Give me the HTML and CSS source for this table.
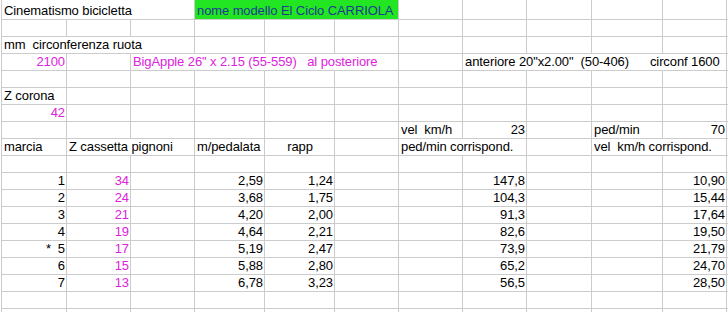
FILE: index.html
```html
<!DOCTYPE html>
<html lang="it">
<head>
<meta charset="utf-8">
<title>Cinematismo bicicletta</title>
<link rel="stylesheet" href="styles.css">
</head>
<body>
<div class="sheet">
  <div class="row first">
    <div class="cell a span3 over">Cinematismo bicicletta</div>
    <div class="cell d span3 title">nome modello El Ciclo CARRIOLA</div>
  </div>
  <div class="row"></div>
  <div class="row">
    <div class="cell a span3 over">mm  circonferenza ruota</div>
  </div>
  <div class="row">
    <div class="cell a right pink">2100</div>
    <div class="cell c span4 over pink">BigApple 26" x 2.15 (55-559)   al posteriore</div>
    <div class="cell h span4 over">anteriore 20"x2.00"  (50-406)      circonf 1600</div>
  </div>
  <div class="row"></div>
  <div class="row">
    <div class="cell a">Z corona</div>
  </div>
  <div class="row">
    <div class="cell a right pink">42</div>
  </div>
  <div class="row">
    <div class="cell g">vel  km/h</div>
    <div class="cell h right">23</div>
    <div class="cell j">ped/min</div>
    <div class="cell k right">70</div>
  </div>
  <div class="row">
    <div class="cell a">marcia</div>
    <div class="cell b span2 over">Z cassetta pignoni</div>
    <div class="cell d">m/pedalata</div>
    <div class="cell e center">rapp</div>
    <div class="cell g span2 over">ped/min corrispond.</div>
    <div class="cell j span2 over">vel  km/h corrispond.</div>
  </div>
  <div class="row"></div>
  <div class="row">
    <div class="cell a right">1</div>
    <div class="cell b right pink">34</div>
    <div class="cell d right">2,59</div>
    <div class="cell e right">1,24</div>
    <div class="cell h right">147,8</div>
    <div class="cell k right">10,90</div>
  </div>
  <div class="row">
    <div class="cell a right">2</div>
    <div class="cell b right pink">24</div>
    <div class="cell d right">3,68</div>
    <div class="cell e right">1,75</div>
    <div class="cell h right">104,3</div>
    <div class="cell k right">15,44</div>
  </div>
  <div class="row">
    <div class="cell a right">3</div>
    <div class="cell b right pink">21</div>
    <div class="cell d right">4,20</div>
    <div class="cell e right">2,00</div>
    <div class="cell h right">91,3</div>
    <div class="cell k right">17,64</div>
  </div>
  <div class="row">
    <div class="cell a right">4</div>
    <div class="cell b right pink">19</div>
    <div class="cell d right">4,64</div>
    <div class="cell e right">2,21</div>
    <div class="cell h right">82,6</div>
    <div class="cell k right">19,50</div>
  </div>
  <div class="row">
    <div class="cell a right">*  5</div>
    <div class="cell b right pink">17</div>
    <div class="cell d right">5,19</div>
    <div class="cell e right">2,47</div>
    <div class="cell h right">73,9</div>
    <div class="cell k right">21,79</div>
  </div>
  <div class="row">
    <div class="cell a right">6</div>
    <div class="cell b right pink">15</div>
    <div class="cell d right">5,88</div>
    <div class="cell e right">2,80</div>
    <div class="cell h right">65,2</div>
    <div class="cell k right">24,70</div>
  </div>
  <div class="row">
    <div class="cell a right">7</div>
    <div class="cell b right pink">13</div>
    <div class="cell d right">6,78</div>
    <div class="cell e right">3,23</div>
    <div class="cell h right">56,5</div>
    <div class="cell k right">28,50</div>
  </div>
  <div class="row"></div>
  <div class="row"></div>
</div>
</body>
</html>
```
FILE: styles.css
```css
* { box-sizing: border-box; }

html, body {
  margin: 0;
  padding: 0;
  background: #ffffff;
  overflow: hidden;
}

body {
  font-family: "Liberation Sans", Arial, sans-serif;
  font-size: 13px;
  letter-spacing: -0.1px;
  color: #000000;
}

.sheet {
  margin-left: 1px;
  border-left: 1px solid #cccccc;
  background-image: linear-gradient(to right,
    transparent 0 64px, #cccccc 64px 65px,
    transparent 65px 128px, #cccccc 128px 129px,
    transparent 129px 192px, #cccccc 192px 193px,
    transparent 193px 262px, #cccccc 262px 263px,
    transparent 263px 332px, #cccccc 332px 333px,
    transparent 333px 396px, #cccccc 396px 397px,
    transparent 397px 460px, #cccccc 460px 461px,
    transparent 461px 524px, #cccccc 524px 525px,
    transparent 525px 589px, #cccccc 589px 590px,
    transparent 590px 660px, #cccccc 660px 661px,
    transparent 661px 724px, #cccccc 724px 725px,
    transparent 725px);
}

.row {
  display: grid;
  grid-template-columns: 65px 64px 64px 70px 70px 64px 64px 64px 65px 71px 64px 1fr;
  height: 17px;
  border-bottom: 1px solid #cccccc;
}

.row.first { height: 20px; }

.cell {
  grid-row: 1;
  align-self: stretch;
  padding: 0 2px;
  line-height: 16px;
  white-space: pre;
}

.first .cell { padding-top: 3px; }

.a { grid-column-start: 1; }
.b { grid-column-start: 2; }
.c { grid-column-start: 3; }
.d { grid-column-start: 4; }
.e { grid-column-start: 5; }
.f { grid-column-start: 6; }
.g { grid-column-start: 7; }
.h { grid-column-start: 8; }
.i { grid-column-start: 9; }
.j { grid-column-start: 10; }
.k { grid-column-start: 11; }

.span2 { grid-column-end: span 2; }
.span3 { grid-column-end: span 3; }
.span4 { grid-column-end: span 4; }

.right { text-align: right; }
.center { text-align: center; }

.over {
  background: #ffffff;
  margin-right: 1px;
}

.pink { color: #dd22dd; }

.title {
  background: #22e622;
  color: #1f3a93;
  margin-right: 1px;
}
```
